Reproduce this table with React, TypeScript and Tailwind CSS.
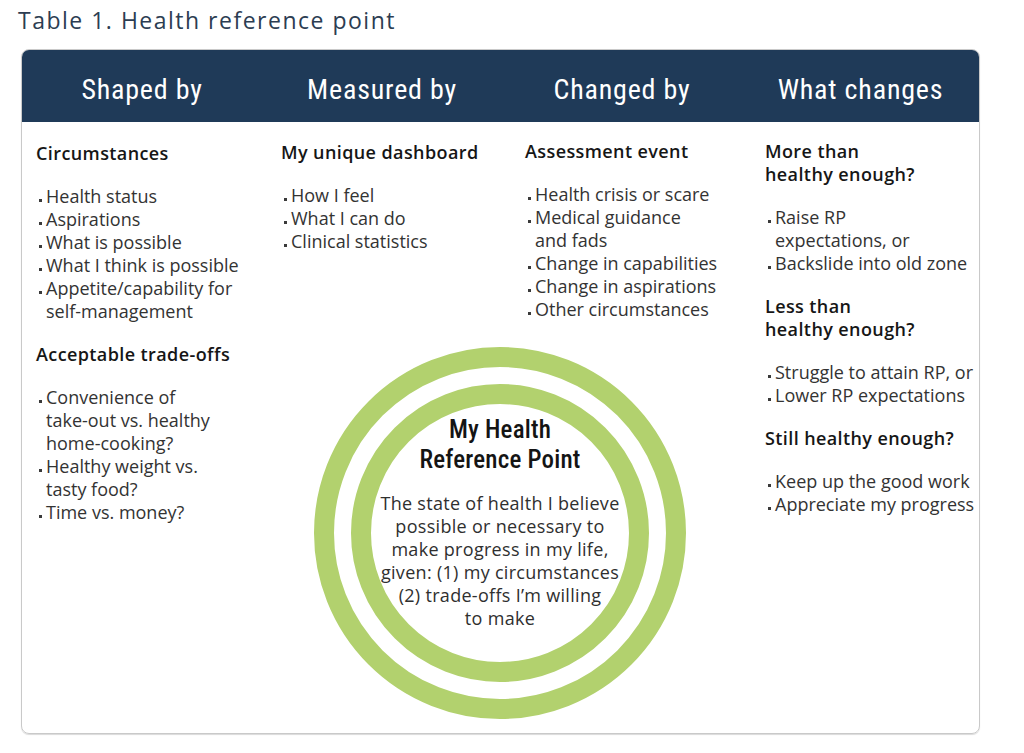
import React from "react";

const condensed = {
  fontFamily: "'Roboto Condensed', Roboto, 'Liberation Sans', sans-serif",
};
const body = { fontFamily: "'Open Sans', 'Liberation Sans', sans-serif" };

type Section = { head: string[]; items: string[][] };
type Column = { pad: string; top: string; sections: Section[] };

const headers = ["Shaped by", "Measured by", "Changed by", "What changes"];

const columns: Column[] = [
  {
    pad: "pl-[14px]",
    top: "pt-[20px]",
    sections: [
      {
        head: ["Circumstances"],
        items: [
          ["Health status"],
          ["Aspirations"],
          ["What is possible"],
          ["What I think is possible"],
          ["Appetite/capability for", "self-management"],
        ],
      },
      {
        head: ["Acceptable trade-offs"],
        items: [
          ["Convenience of", "take-out vs. healthy", "home-cooking?"],
          ["Healthy weight vs.", "tasty food?"],
          ["Time vs. money?"],
        ],
      },
    ],
  },
  {
    pad: "pl-[19px]",
    top: "pt-[19px]",
    sections: [
      {
        head: ["My unique dashboard"],
        items: [["How I feel"], ["What I can do"], ["Clinical statistics"]],
      },
    ],
  },
  {
    pad: "pl-[23px]",
    top: "pt-[18px]",
    sections: [
      {
        head: ["Assessment event"],
        items: [
          ["Health crisis or scare"],
          ["Medical guidance", "and fads"],
          ["Change in capabilities"],
          ["Change in aspirations"],
          ["Other circumstances"],
        ],
      },
    ],
  },
  {
    pad: "pl-[23px]",
    top: "pt-[18px]",
    sections: [
      {
        head: ["More than", "healthy enough?"],
        items: [["Raise RP", "expectations, or"], ["Backslide into old zone"]],
      },
      {
        head: ["Less than", "healthy enough?"],
        items: [["Struggle to attain RP, or"], ["Lower RP expectations"]],
      },
      {
        head: ["Still healthy enough?"],
        items: [["Keep up the good work"], ["Appreciate my progress"]],
      },
    ],
  },
];

const Bullet: React.FC<{ lines: string[] }> = ({ lines }) => (
  <li className="flex">
    <span className="w-[3px] h-[3px] bg-[#3a3a3a] mt-[14px] mr-[4px] ml-[3px] shrink-0" />
    <span>
      {lines.map((l) => (
        <span key={l} className="block whitespace-nowrap">
          {l}
        </span>
      ))}
    </span>
  </li>
);

const RefCircle: React.FC = () => (
  <div className="absolute left-[288px] top-[221px] w-[380px] h-[380px]">
    <svg width="380" height="380" viewBox="0 0 380 380" className="absolute inset-0">
      <circle cx="190" cy="190" r="176" fill="none" stroke="#b2d16e" strokeWidth="20" />
      <circle cx="190" cy="190" r="139" fill="none" stroke="#b2d16e" strokeWidth="20" />
    </svg>
    <div className="absolute inset-0 flex flex-col items-center pt-[72px] text-center">
      <div
        className="text-[25px] leading-[30px] font-medium tracking-[0.2px] text-[#141414]"
        style={condensed}
      >
        My Health
        <br />
        Reference Point
      </div>
      <div
        className="mt-[17px] text-[18px] leading-[23px] tracking-[0.3px] text-[#2f2f2f] whitespace-nowrap"
        style={body}
      >
        The state of health I believe
        <br />
        possible or necessary to
        <br />
        make progress in my life,
        <br />
        given: (1) my circumstances
        <br />
        (2) trade-offs I’m willing
        <br />
        to make
      </div>
    </div>
  </div>
);

export default function App() {
  return (
    <div className="w-[1024px] h-[753px] bg-white pt-[5px]" style={body}>
      <h1 className="pl-[18px] text-[23px] leading-[30px] tracking-[1.5px] text-[#2c3d52]">
        Table 1. Health reference point
      </h1>
      <div className="ml-[21px] mt-[14px] w-[959px] rounded-[8px] border border-[#c9c9c9] shadow-[0_1px_1px_rgba(0,0,0,0.15)] overflow-hidden">
        <div className="grid grid-cols-[240px_240px_240px_1fr] h-[72px] bg-[#1f3a58]">
          {headers.map((h) => (
            <div
              key={h}
              className="flex items-center justify-center pt-[7px] text-white text-[28px] tracking-[0.8px]"
              style={condensed}
            >
              {h}
            </div>
          ))}
        </div>
        <div className="relative grid grid-cols-[240px_240px_240px_1fr] h-[611px] text-[18px] leading-[23px] text-[#333333]">
          {columns.map((c, i) => (
            <div key={i} className={`${c.pad} ${c.top} flex flex-col gap-[20px]`}>
              {c.sections.map((s) => (
                <div key={s.head.join(" ")}>
                  <div className="font-semibold tracking-[0.4px] text-[#161616] mb-[20px]">
                    {s.head.map((h) => (
                      <div key={h}>{h}</div>
                    ))}
                  </div>
                  <ul>
                    {s.items.map((it) => (
                      <Bullet key={it.join(" ")} lines={it} />
                    ))}
                  </ul>
                </div>
              ))}
            </div>
          ))}
          <RefCircle />
        </div>
      </div>
    </div>
  );
}
